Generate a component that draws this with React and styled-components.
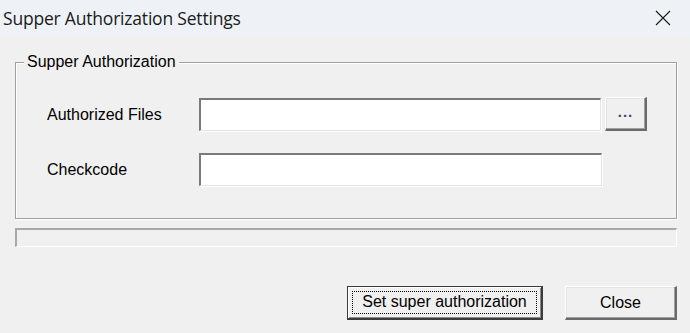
import React from 'react'
import styled, { createGlobalStyle } from 'styled-components'

const GlobalStyle = createGlobalStyle`
  html, body {
    margin: 0;
    padding: 0;
    background: #f0f0f0;
  }
  * {
    box-sizing: border-box;
  }
`

const Window = styled.div`
  width: 690px;
  height: 333px;
  display: flex;
  flex-direction: column;
  background: #f0f0f0;
  font-family: 'Liberation Sans', Arial, sans-serif;
  font-size: 16px;
  color: #000;
  overflow: hidden;
`

const TitleBar = styled.div`
  height: 36px;
  flex: none;
  display: flex;
  align-items: center;
  justify-content: space-between;
  background: #eef2f6;
  padding: 0 0 0 3px;
`

const Title = styled.span`
  font-family: 'Open Sans', 'Noto Sans', sans-serif;
  font-size: 17.5px;
  color: #1a1a1a;
  letter-spacing: -0.2px;
`

const CloseX = styled.div`
  width: 46px;
  height: 36px;
  display: flex;
  align-items: center;
  justify-content: center;
  margin-right: 4px;
`

const Body = styled.div`
  flex: 1;
  display: flex;
  flex-direction: column;
  padding: 17px 13px 0 15px;
`

const Group = styled.div`
  position: relative;
  margin-top: 9px;
  height: 157px;
  border: 1px solid #a0a0a0;
  box-shadow: 1px 1px 0 #fff, inset 1px 1px 0 #fff;
  padding: 35px 0 0 31px;
  display: flex;
  flex-direction: column;
  gap: 22px;
`

const Caption = styled.span`
  position: absolute;
  left: 8px;
  top: -10px;
  padding: 0 3px;
  background: #f0f0f0;
  line-height: 18px;
`

const Row = styled.div`
  display: flex;
  align-items: flex-start;
  height: 33px;
`

const Label = styled.span`
  width: 152px;
  flex: none;
  align-self: center;
`

const TextBox = styled.div`
  width: ${p => p.$w}px;
  height: 33px;
  background: #fff;
  border-top: 2px solid #7a7a7a;
  border-left: 2px solid #7a7a7a;
  border-right: 1px solid #e3e3e3;
  border-bottom: 1px solid #e3e3e3;
  box-shadow: 1px 1px 0 #fff;
`

const BrowseButton = styled.button`
  margin: -1px 0 0 4px;
  width: 42px;
  height: 34px;
  padding: 0 0 4px;
  background: #f0f0f0;
  border-top: 1px solid #fff;
  border-left: 1px solid #fff;
  border-right: 2px solid #6a6a6a;
  border-bottom: 2px solid #6a6a6a;
  box-shadow: inset -1px -1px 0 #a0a0a0, inset 1px 1px 0 #e3e3e3;
  font-family: 'Liberation Sans', Arial, sans-serif;
  font-size: 15px;
  font-weight: bold;
  letter-spacing: 1px;
  color: #4a4266;
`

const Progress = styled.div`
  margin-top: 9px;
  height: 19px;
  border-top: 2px solid #a8a8a8;
  border-left: 2px solid #a8a8a8;
  border-right: 1px solid #fff;
  border-bottom: 1px solid #fff;
`

const Footer = styled.div`
  margin-top: 39px;
  display: flex;
  justify-content: flex-end;
  gap: 22px;
`

const DialogButton = styled.button`
  width: ${p => p.$w}px;
  height: 34px;
  background: #f0f0f0;
  font-family: 'Liberation Sans', Arial, sans-serif;
  font-size: 16px;
  color: #000;
  padding: 0;
  border-top: 1px solid ${p => (p.$default ? '#3c3c3c' : '#fff')};
  border-left: 1px solid ${p => (p.$default ? '#3c3c3c' : '#fff')};
  border-right: 2px solid ${p => (p.$default ? '#3c3c3c' : '#6a6a6a')};
  border-bottom: 2px solid ${p => (p.$default ? '#3c3c3c' : '#6a6a6a')};
  box-shadow: ${p =>
    p.$default
      ? 'inset 1px 1px 0 #fff, inset -1px -1px 0 #8a8a8a'
      : 'inset -1px -1px 0 #a0a0a0, inset 1px 1px 0 #e3e3e3'};
  display: flex;
  align-items: center;
  justify-content: center;
`

const FocusRing = styled.span`
  display: flex;
  align-items: center;
  justify-content: center;
  width: calc(100% - 8px);
  height: calc(100% - 8px);
  border: 1px dotted #000;
  padding-bottom: 1px;
`

export default function App() {
  return (
    <>
      <GlobalStyle />
      <Window>
        <TitleBar>
          <Title>Supper Authorization Settings</Title>
          <CloseX>
            <svg width="16" height="16" viewBox="0 0 16 16">
              <path d="M1 1 L15 15 M15 1 L1 15" stroke="#1a1a1a" strokeWidth="1.1" fill="none" />
            </svg>
          </CloseX>
        </TitleBar>
        <Body>
          <Group>
            <Caption>Supper Authorization</Caption>
            <Row>
              <Label>Authorized Files</Label>
              <TextBox $w={402} />
              <BrowseButton>...</BrowseButton>
            </Row>
            <Row>
              <Label>Checkcode</Label>
              <TextBox $w={403} />
            </Row>
          </Group>
          <Progress />
          <Footer>
            <DialogButton $w={196} $default>
              <FocusRing>Set super authorization</FocusRing>
            </DialogButton>
            <DialogButton $w={112}>Close</DialogButton>
          </Footer>
        </Body>
      </Window>
    </>
  )
}
